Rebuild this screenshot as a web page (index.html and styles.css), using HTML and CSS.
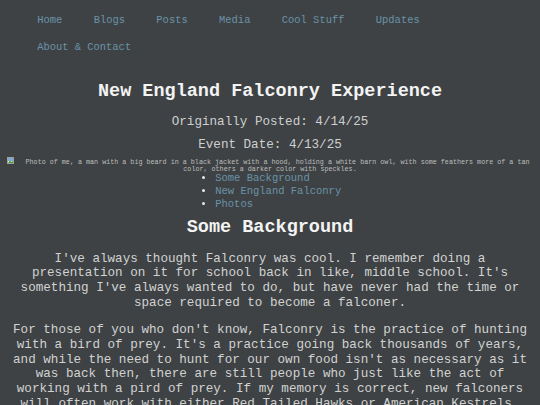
FILE: index.html
```html
<!DOCTYPE html>
<html lang="en">
<head>
<meta charset="utf-8">
<title>New England Falconry Experience</title>
<link rel="stylesheet" href="styles.css">
</head>
<body>
<div class="page">
  <nav class="nav">
    <a href="#">Home</a>
    <a href="#">Blogs</a>
    <a href="#">Posts</a>
    <a href="#">Media</a>
    <a href="#">Cool Stuff</a>
    <a href="#">Updates</a>
    <a href="#">About &amp; Contact</a>
  </nav>
  <h1 class="title">New England Falconry Experience</h1>
  <p class="posted">Originally Posted: 4/14/25</p>
  <p class="event">Event Date: 4/13/25</p>
  <div class="photo">
    <span class="broken"><svg width="7" height="7" viewBox="0 0 7 7"><rect x="0.5" y="0.5" width="6" height="6" fill="#e8ece8" stroke="#9aa29a" stroke-width="1"/><rect x="1" y="1" width="5" height="3" fill="#7fa9d8"/><path d="M1 6 L3 3.5 L4.5 5 L6 3.8 L6 6 Z" fill="#4c9a3c"/></svg></span>Photo of me, a man with a big beard in a black jacket with a hood, holding a white barn owl, with some feathers more of a tan color, others a darker color with speckles.
  </div>
  <ul class="toc">
    <li><a href="#bg">Some Background</a></li>
    <li><a href="#ne">New England Falconry</a></li>
    <li><a href="#photos">Photos</a></li>
  </ul>
  <h2 class="section" id="bg">Some Background</h2>
  <p class="body first">I've always thought Falconry was cool. I remember doing a presentation on it for school back in like, middle school. It's something I've always wanted to do, but have never had the time or space required to become a falconer.</p>
  <p class="body">For those of you who don't know, Falconry is the practice of hunting with a bird of prey. It's a practice going back thousands of years, and while the need to hunt for our own food isn't as necessary as it was back then, there are still people who just like the act of working with a pird of prey. If my memory is correct, new falconers will often work with either Red Tailed Hawks or American Kestrels. They are both fairly common birds and relatively easy to handle.</p>
</div>
</body>
</html>
```
FILE: styles.css
```css
html, body {
  margin: 0;
  padding: 0;
  background: #3e4244;
}
body {
  font-family: "Liberation Mono", "Courier New", monospace;
  color: #d4d4d4;
  overflow: hidden;
  height: 405px;
}
.page {
  padding: 0 6.3px;
  text-align: center;
}
.nav {
  display: flex;
  flex-wrap: wrap;
  column-gap: 31.4px;
  row-gap: 14.5px;
  padding: 14px 0 0 30.9px;
  font-size: 10.45px;
  line-height: 12px;
  text-align: left;
}
.nav a {
  color: #6a92a8;
  text-decoration: none;
}
.title {
  margin: 28.7px 0 0;
  font-size: 18.5px;
  line-height: 21px;
  font-weight: bold;
  color: #f3f3f3;
}
.posted {
  margin: 13.1px 0 0;
  font-size: 12.6px;
  line-height: 14.7px;
  color: #cfcfcf;
}
.event {
  margin: 8.4px 0 0;
  font-size: 12.6px;
  line-height: 14.7px;
  color: #cfcfcf;
}
.photo {
  margin: 5.6px 0 0;
  font-size: 6.73px;
  line-height: 7.5px;
  color: #bdbdbd;
}
.broken {
  float: left;
  width: 14.4px;
  height: 6px;
  margin-top: -2px;
  margin-left: 0.7px;
  text-align: left;
}
.broken svg {
  display: block;
}
.toc {
  width: fit-content;
  margin: -1.5px auto 0;
  padding-left: 16.4px;
  font-size: 10.5px;
  line-height: 12.9px;
  text-align: left;
  color: #e6e6e6;
}
.toc a {
  color: #6a92a8;
  text-decoration: none;
}
.section {
  margin: 6.3px 0 0;
  font-size: 18.5px;
  line-height: 21px;
  font-weight: bold;
  color: #f3f3f3;
}
.body {
  margin: 12.2px 0 0;
  font-size: 12.6px;
  line-height: 14.8px;
  color: #d2d2d2;
}
.body.first {
  margin-top: 13.4px;
}
```
